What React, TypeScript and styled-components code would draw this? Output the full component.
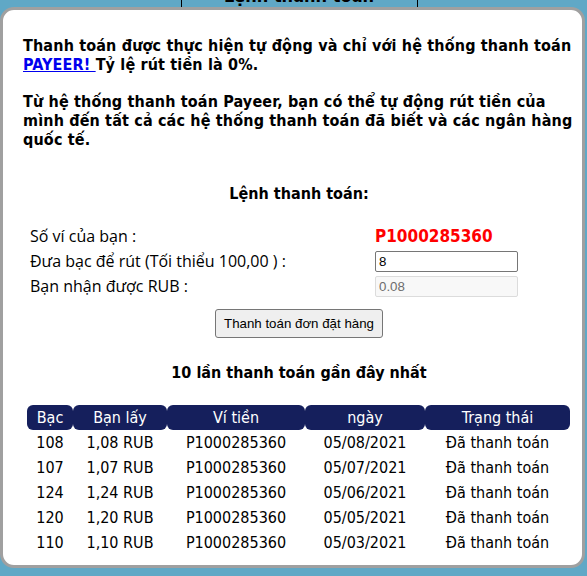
import React, { useState } from "react";
import styled, { createGlobalStyle } from "styled-components";

const GlobalStyle = createGlobalStyle`
  html, body {
    margin: 0;
    padding: 0;
    background: #60a8c6;
  }
`;

const Page = styled.div`
  height: 576px;
  overflow: hidden;
  background: #60a8c6;
  font-family: "DejaVu Sans Condensed", "DejaVu Sans", sans-serif;
  color: #000;
`;

const TabStrip = styled.div`
  height: 7px;
  display: flex;
  justify-content: center;
  align-items: flex-end;
  overflow: hidden;
  padding-left: 11px;
`;

const Tab = styled.div`
  flex: none;
  width: 237px;
  height: 30px;
  box-sizing: border-box;
  border-left: 1px solid #000;
  border-right: 1px solid #000;
  display: flex;
  align-items: flex-end;
  justify-content: center;
  padding-bottom: 1px;
  font-weight: bold;
  font-size: 18px;
  line-height: 20px;
`;

const Panel = styled.div`
  width: 585px;
  height: 561px;
  box-sizing: border-box;
  background: #fff;
  border: 3px solid #a0a0a0;
  border-radius: 14px;
  padding: 26px 7px 0 20px;
`;

const Intro = styled.p`
  margin: 0 0 18px;
  font-size: 16px;
  font-weight: bold;
  line-height: 19px;
  letter-spacing: 0.15px;
`;

const PayLink = styled.a`
  color: #0000ee;
  text-decoration: underline;
`;

const SectionTitle = styled.h3<{ $gap: number }>`
  margin: ${(p) => p.$gap}px 0 0;
  text-align: center;
  font-size: 16px;
  font-weight: bold;
  line-height: 20px;
`;

const Form = styled.div`
  display: grid;
  grid-template-columns: 345px 143px;
  row-gap: 4px;
  padding-left: 7px;
  margin-top: 22px;
`;

const Label = styled.div`
  font-family: "Open Sans", "DejaVu Sans", sans-serif;
  font-size: 16px;
  line-height: 21px;
  display: flex;
  align-items: center;
`;

const Wallet = styled.div`
  color: #f00;
  font-weight: bold;
  font-size: 17px;
  line-height: 21px;
`;

const Field = styled.input<{ $disabled?: boolean }>`
  width: 143px;
  height: 21px;
  box-sizing: border-box;
  padding: 1px 3px;
  font-family: "Liberation Sans", Arial, sans-serif;
  font-size: 13.3px;
  border: 1px solid ${(p) => (p.$disabled ? "#dcdcdc" : "#767676")};
  border-radius: 2px;
  background: ${(p) => (p.$disabled ? "#f8f8f8" : "#fff")};
  color: ${(p) => (p.$disabled ? "#6d6d6d" : "#000")};
  outline: none;
`;

const ButtonRow = styled.div`
  display: flex;
  justify-content: center;
  margin-top: 12px;
`;

const SubmitButton = styled.button`
  height: 29px;
  padding: 0 8px;
  font-family: "Liberation Sans", Arial, sans-serif;
  font-size: 13.3px;
  color: #000;
  background: #efefef;
  border: 1px solid #767676;
  border-radius: 3px;
`;

const Table = styled.table`
  margin-top: 22px;
  margin-left: 4px;
  border-collapse: separate;
  border-spacing: 0;
  font-size: 16px;
`;

const Head = styled.th<{ $w: number }>`
  width: ${(p) => p.$w}px;
  height: 25px;
  padding: 0;
  background: #151f5c;
  color: #fff;
  font-weight: normal;
  border-radius: 6px;
  text-align: center;
`;

const Cell = styled.td`
  height: 25px;
  padding: 0;
  text-align: center;
`;

const columns = [
  { title: "Bạc", w: 46 },
  { title: "Bạn lấy", w: 94 },
  { title: "Ví tiền", w: 138 },
  { title: "ngày", w: 120 },
  { title: "Trạng thái", w: 145 },
];

const payments = [
  ["108", "1,08 RUB", "P1000285360", "05/08/2021", "Đã thanh toán"],
  ["107", "1,07 RUB", "P1000285360", "05/07/2021", "Đã thanh toán"],
  ["124", "1,24 RUB", "P1000285360", "05/06/2021", "Đã thanh toán"],
  ["120", "1,20 RUB", "P1000285360", "05/05/2021", "Đã thanh toán"],
  ["110", "1,10 RUB", "P1000285360", "05/03/2021", "Đã thanh toán"],
];

const App: React.FC = () => {
  const [amount, setAmount] = useState("8");
  const rub = (parseFloat(amount.replace(",", ".")) / 100 || 0).toFixed(2);

  return (
    <Page>
      <GlobalStyle />
      <TabStrip>
        <Tab>Lệnh thanh toán</Tab>
      </TabStrip>
      <Panel>
        <Intro>
          Thanh toán được thực hiện tự động và chỉ với hệ thống thanh toán{" "}
          <PayLink href="#">PAYEER! </PayLink>Tỷ lệ rút tiền là 0%.
        </Intro>
        <Intro>
          Từ hệ thống thanh toán Payeer, bạn có thể tự động rút tiền của mình
          đến tất cả các hệ thống thanh toán đã biết và các ngân hàng quốc tế.
        </Intro>

        <SectionTitle $gap={35}>Lệnh thanh toán:</SectionTitle>
        <Form>
          <Label>Số ví của bạn :</Label>
          <Wallet>P1000285360</Wallet>
          <Label>Đưa bạc để rút (Tối thiểu 100,00 ) :</Label>
          <Field value={amount} onChange={(e) => setAmount(e.target.value)} />
          <Label>Bạn nhận được RUB :</Label>
          <Field $disabled disabled value={rub} />
        </Form>
        <ButtonRow>
          <SubmitButton>Thanh toán đơn đặt hàng</SubmitButton>
        </ButtonRow>

        <SectionTitle $gap={25}>10 lần thanh toán gần đây nhất</SectionTitle>
        <Table>
          <thead>
            <tr>
              {columns.map((c) => (
                <Head key={c.title} $w={c.w}>
                  {c.title}
                </Head>
              ))}
            </tr>
          </thead>
          <tbody>
            {payments.map((row, i) => (
              <tr key={i}>
                {row.map((v, j) => (
                  <Cell key={j}>{v}</Cell>
                ))}
              </tr>
            ))}
          </tbody>
        </Table>
      </Panel>
    </Page>
  );
};

export default App;
